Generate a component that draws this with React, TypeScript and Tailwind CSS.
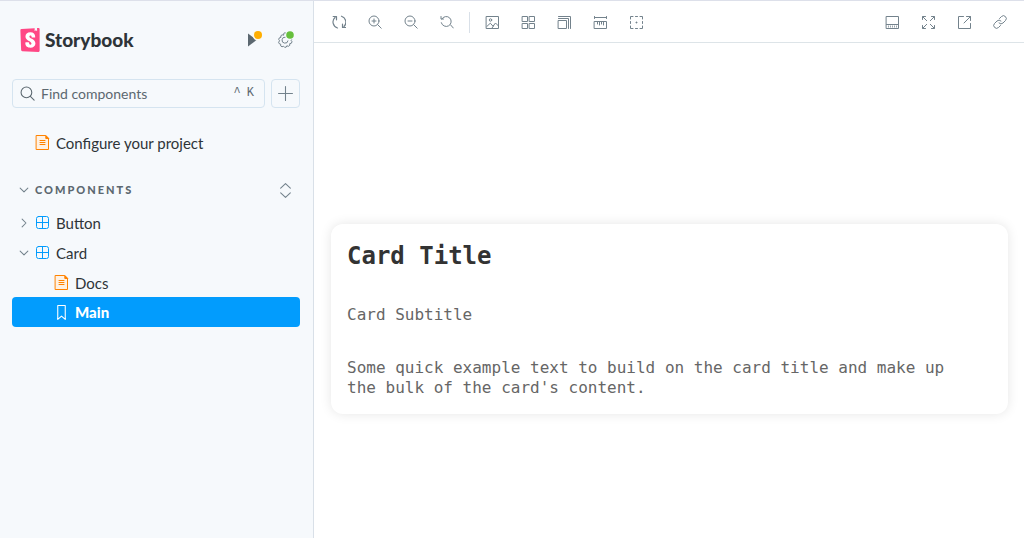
import React from 'react';

type IconProps = { children: React.ReactNode; className?: string; viewBox?: string };

function Icon({ children, className = 'size-3.5', viewBox = '0 0 14 14' }: IconProps) {
  return (
    <svg viewBox={viewBox} fill="none" stroke="currentColor" strokeLinecap="round" strokeLinejoin="round" className={className} aria-hidden="true">
      {children}
    </svg>
  );
}

function Lens() {
  return (
    <>
      <circle cx="6" cy="6" r="5" />
      <path d="M9.7 9.7 13.200 13.200" />
    </>
  );
}

type ToolButtonProps = { label: string; viewBox?: string; children: React.ReactNode };

function ToolButton({ label, viewBox, children }: ToolButtonProps) {
  return (
    <button type="button" aria-label={label} className="flex size-7 items-center justify-center rounded text-[#73828c] hover:bg-sky-50">
      <Icon viewBox={viewBox}>{children}</Icon>
    </button>
  );
}

const INSET = '-1 -1 14 14';

function DocIcon() {
  return (
    <Icon className="size-[15px] shrink-0 text-[#ff8300]" viewBox="0 0 15 15">
      <path d="M1.500.5h9l3 3v11h-12z" fill="#fff1e2" />
      <path d="M10.800.8v2.700h2.700z" fill="currentColor" />
      <path d="M5 5.500h5M5 7.500h5M5 9.500h5" />
    </Icon>
  );
}

function ComponentIcon() {
  return (
    <Icon className="size-3.5 shrink-0 text-[#029cfd]">
      <rect x=".5" y=".5" width="12" height="12" rx="2" />
      <path d="M6.500.5v12M.5 6.500h12" />
    </Icon>
  );
}

function Chevron({ open }: { open: boolean }) {
  return (
    <Icon className="size-3 shrink-0 text-[#73828c]">
      {open ? <path d="M2.500 4.800 7 9.300l4.500-4.500" strokeWidth="1.200" /> : <path d="M4.800 2.500 9.300 7l-4.500 4.500" strokeWidth="1.200" />}
    </Icon>
  );
}

function Sidebar() {
  return (
    <nav aria-label="Storybook" className="w-[314px] shrink-0 border-r border-[#d9e0e8] bg-[#f6f9fc] px-3 pt-[23px] pr-[13px]">
      <header className="flex h-[31px] items-center pl-2">
        <a href="#home" className="flex items-center gap-[5px] text-[19px] leading-6 font-black text-[#2e3438]">
          <svg viewBox="2 0 20 24" className="h-6 w-5" aria-hidden="true">
            <path d="M6 3h12.500v18H6z" fill="#fff" />
            <path
              fill="#ff4785"
              d="M16.71.243l-.12 2.71a.18.18 0 00.29.15l1.06-.8.9.7a.18.18 0 00.28-.14l-.1-2.76 1.33-.1a1.2 1.2 0 011.279 1.2v21.596a1.2 1.2 0 01-1.26 1.2l-16.096-.72a1.2 1.2 0 01-1.15-1.16l-.75-19.797a1.2 1.2 0 011.13-1.27L16.7.222zM13.64 9.3c0 .47 3.16.24 3.59-.08 0-3.2-1.72-4.89-4.859-4.89-3.15 0-4.899 1.72-4.899 4.29 0 4.45 5.999 4.53 5.999 6.959 0 .7-.32 1.1-1.05 1.1-.96 0-1.35-.49-1.3-2.16 0-.36-3.649-.48-3.769 0-.27 4.03 2.23 5.2 5.099 5.2 2.79 0 4.969-1.49 4.969-4.18 0-4.77-6.099-4.64-6.099-6.999 0-.97.72-1.1 1.13-1.1.45 0 1.25.07 1.19 1.87z"
            />
          </svg>
          Storybook
        </a>
        <div className="ml-auto flex gap-1 pr-px">
          <button type="button" aria-label="Onboarding" className="flex size-7 items-center justify-center">
            <svg viewBox="0 0 18 18" className="size-[18px]" aria-hidden="true">
              <path d="M4 2.500v13L12.500 9z" fill="#5c6870" />
              <circle cx="14" cy="4" r="5.500" fill="#fbf8ee" />
              <circle cx="14" cy="4" r="4" fill="#ffae00" />
            </svg>
          </button>
          <button type="button" aria-label="Settings" className="flex size-7 items-center justify-center">
            <svg viewBox="0 0 18 18" className="size-[18px]" fill="none" stroke="#73828c" aria-hidden="true">
              <path d="m7.700 2.500 1.300-.8 1.300.8.500 1.300 1.700-.5 1.300 1-.2 1.700 1.800.5.6 1.500-.9 1.300.9 1.400-.6 1.500-1.700.5.1 1.600-1.300 1-1.700-.5-.7 1.400-1.500.1-1.100-1.100-1.500.6-1.300-.9v-1.700l-1.600-.6-.5-1.400 1-1.400-.9-1.400.6-1.500 1.600-.5-.1-1.600 1.300-1 1.600.4z" />
              <path d="M12 9.500a3 3 0 1 1-2.500-3.300" />
              <circle cx="14" cy="4" r="4.800" fill="#f6f9fc" stroke="none" />
              <circle cx="14" cy="4" r="3.800" fill="#66bf3c" stroke="none" />
            </svg>
          </button>
        </div>
      </header>

      <div className="mt-6 flex gap-1.5">
        <label className="flex h-[29px] flex-1 items-center gap-1.5 rounded border border-[#d5e4f0] pr-2 pl-[7px] text-[#5c6870]">
          <Icon className="size-[15px] shrink-0"><Lens /></Icon>
          <input
            type="text"
            aria-label="Find components"
            placeholder="Find components"
            className="w-0 flex-1 bg-transparent text-sm leading-5 outline-none placeholder:text-[#5c6870]"
          />
          <kbd className="flex gap-1.5 pr-0.5 pb-px font-['Liberation_Mono',monospace] text-[12px] leading-4">
            <span>^</span>
            <span>K</span>
          </kbd>
        </label>
        <button type="button" aria-label="Create a new story" className="flex size-[29px] items-center justify-center rounded border border-[#d5e4f0] text-[#73828c]">
          <Icon className="size-[15px]"><path d="M7 .5v13M.5 7h13" /></Icon>
        </button>
      </div>

      <a href="#configure" className="mt-5 flex h-[29px] items-center gap-[6px] pl-[23px] text-[15px] leading-5 text-[#2e3438]">
        <DocIcon />
        Configure your project
      </a>

      <div className="mt-[19px] flex h-7 items-center justify-between pr-[7px] pl-1.5 text-[#5c6870]">
        <button type="button" className="flex items-center gap-[5px] text-[11px] leading-4 font-black tracking-[2px]">
          <Chevron open />
          COMPONENTS
        </button>
        <button type="button" aria-label="Expand all">
          <Icon className="block size-[15px] text-[#73828c]"><path d="M2.500 4.800 7 .5l4.500 4.300M2.500 9.200 7 13.500l4.500-4.300" /></Icon>
        </button>
      </div>

      <ul className="mt-1 text-[15px] leading-5 text-[#2e3438]">
        <li>
          <a href="#button" className="flex h-[30px] items-center gap-[6px] pl-1.5"><Chevron open={false} /><ComponentIcon />Button</a>
        </li>
        <li>
          <a href="#card" className="flex h-[30px] items-center gap-[6px] pl-1.5"><Chevron open /><ComponentIcon />Card</a>
          <ul>
            <li>
              <a href="#docs" className="flex h-[29px] items-center gap-[6px] pl-[42px]"><DocIcon />Docs</a>
            </li>
            <li>
              <a href="#main" aria-current="page" className="flex h-[30px] items-center gap-[6px] rounded bg-[#029cfd] pl-[42px] font-black text-white">
                <Icon className="size-[15px]"><path d="M3.500.5h7v13L7 10.300 3.500 13.500z" /></Icon>
                Main
              </a>
            </li>
          </ul>
        </li>
      </ul>
    </nav>
  );
}

function Toolbar() {
  return (
    <div role="toolbar" aria-label="Canvas tools" className="flex h-[42px] items-center justify-between border-b border-[#dde4e8] pt-px pr-[10px] pl-[11px]">
      <div className="flex items-center gap-2">
        <ToolButton label="Remount component">
          <path d="M5.500 13A6.200 6.200 0 0 1 3 2.500M1.200 1.500h3.300v3.300M9.500 1.200a6.200 6.200 0 0 1 2.500 10.300M13.800 12.500h-3.300V9.200" strokeWidth="1.200" />
        </ToolButton>
        <ToolButton label="Zoom in"><Lens /><path d="M4 6h4M6 4v4" /></ToolButton>
        <ToolButton label="Zoom out"><Lens /><path d="M4 6h4" /></ToolButton>
        <ToolButton label="Reset zoom">
          <path d="M1.300 7.700A5 5 0 1 0 1.800 4M1 1.500V4h2.500M10.500 9.800 13.300 13" />
        </ToolButton>
        <span className="h-[21px] w-px bg-[#d9e0e8]" />
        <ToolButton label="Change background" viewBox={INSET}>
          <rect x=".5" y=".5" width="12" height="12" />
          <circle cx="4.500" cy="4" r="1.200" />
          <path d="m.8 10.500 3.500-3.300 2.700 3L9.500 7l3 3M6 12l1.500-2" />
        </ToolButton>
        <ToolButton label="Apply a grid" viewBox={INSET}>
          <path d="M.5.5h5v5h-5zM7.500.5h5v5h-5zM.5 7.500h5v5h-5zM7.500 7.500h5v5h-5z" />
        </ToolButton>
        <ToolButton label="Change viewport" viewBox={INSET}>
          <path d="M.5 4.500h8v8h-8zM.5 2.500h10v10M.5.5h12v12" />
        </ToolButton>
        <ToolButton label="Enable measure" viewBox={INSET}>
          <path d="M.5.5v2M12.500.5v2M.5 1.500h12M.5 5.500h12v7H.5zM3.500 5.500v2.500M5.500 5.500V9M7.500 5.500v2.500M9.500 5.500V9" />
        </ToolButton>
        <ToolButton label="Apply outlines" viewBox={INSET}>
          <path d="M.5 3V.5H3M5.500.5h2M10 .5h2.500V3M12.500 5.500v2M12.500 10v2.500H10M7.500 12.500h-2M3 12.500H.5V10M.5 7.500v-2M6 6.500h1M6.500 6v1" />
        </ToolButton>
      </div>
      <div className="flex items-center gap-2">
        <ToolButton label="Show addons" viewBox={INSET}>
          <rect x=".5" y=".5" width="12" height="12" />
          <path d="M.5 8.500h12" />
          <path d="M2 10.500h10" strokeDasharray="1 1" strokeWidth="2" strokeLinecap="butt" opacity=".7" />
        </ToolButton>
        <ToolButton label="Go full screen" viewBox={INSET}>
          <path d="M.5 3.500v-3h3M9.500.5h3v3M12.500 9.500v3h-3M3.500 12.500h-3v-3M.7.7l4 4M12.300.7l-4 4M12.300 12.300l-4-4M.7 12.300l4-4" />
        </ToolButton>
        <ToolButton label="Open canvas in new tab" viewBox={INSET}>
          <path d="M5.500.5h-5v12h12v-5M8.500.5h4v4M12.500.5 6 7" />
        </ToolButton>
        <ToolButton label="Copy canvas link">
          <path d="m6.500 3.500 2-2a2.830 2.830 0 0 1 4 4L10 8a2.830 2.830 0 0 1-4 0M7.500 10.500l-2 2a2.830 2.830 0 0 1-4-4L4 6a2.830 2.830 0 0 1 4 0" />
        </ToolButton>
      </div>
    </div>
  );
}

export default function App() {
  return (
    <div className="flex min-h-screen border-t border-[#dde0ea] bg-white font-['Lato',sans-serif]">
      <Sidebar />
      <div className="flex min-w-0 flex-1 flex-col">
        <Toolbar />
        <main className="flex flex-1 items-center px-4 pt-14 pl-[17px]">
          <article className="w-full rounded-xl bg-white p-4 font-['DejaVu_Sans_Mono',monospace] text-[16px] leading-5 text-[#666] shadow-[0_0_12px_rgba(0,0,0,0.1)]">
            <h1 className="text-2xl leading-8 font-bold text-[#333]">Card Title</h1>
            <h2 className="mt-[33px]">Card Subtitle</h2>
            <p className="mt-[33px] max-w-[620px]">
              Some quick example text to build on the card title and make up the bulk of the card's content.
            </p>
          </article>
        </main>
      </div>
    </div>
  );
}
